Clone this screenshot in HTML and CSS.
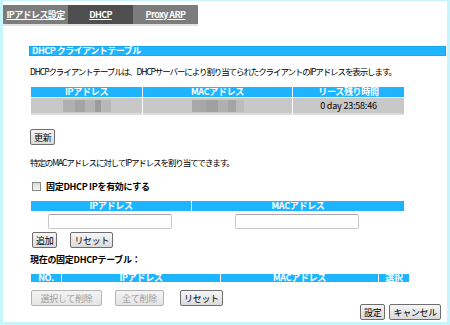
FILE: index.html
```html
<!DOCTYPE html>
<html lang="ja">
<head>
<meta charset="utf-8">
<title>DHCP</title>
<link rel="stylesheet" href="styles.css">
</head>
<body>
<div class="frame">
  <nav class="tabs">
    <a class="tab">IPアドレス設定</a>
    <a class="tab active">DHCP</a>
    <a class="tab">Proxy ARP</a>
  </nav>
  <div class="content">
    <div class="section-title">DHCP クライアントテーブル</div>
    <p class="desc">DHCPクライアントテーブルは、DHCPサーバーにより割り当てられたクライアントのIPアドレスを表示します。</p>
    <table class="grid client">
      <tr class="head">
        <th class="c-ip">IPアドレス</th>
        <th class="c-mac">MACアドレス</th>
        <th class="c-lease">リース残り時間</th>
      </tr>
      <tr class="row">
        <td><span class="blur blur-ip"></span></td>
        <td><span class="blur blur-mac"></span></td>
        <td>0 day 23:58:46</td>
      </tr>
    </table>
    <div class="btn-row refresh-row"><button class="btn">更新</button></div>
    <p class="desc desc2">特定のMACアドレスに対してIPアドレスを割り当てできます。</p>
    <label class="check-row"><span class="checkbox"></span><span class="check-label">固定DHCP IPを有効にする</span></label>
    <table class="grid static">
      <tr class="head">
        <th class="s-ip">IPアドレス</th>
        <th class="s-mac">MACアドレス</th>
      </tr>
      <tr class="input-row">
        <td><span class="input"></span></td>
        <td><span class="input"></span></td>
      </tr>
    </table>
    <div class="btn-row add-row"><button class="btn">追加</button><button class="btn">リセット</button></div>
    <div class="subhead">現在の固定DHCPテーブル：</div>
    <table class="grid current">
      <tr class="head">
        <th class="n-no">NO.</th>
        <th class="n-ip">IPアドレス</th>
        <th class="n-mac">MACアドレス</th>
        <th class="n-sel">選択</th>
      </tr>
    </table>
    <div class="btn-row del-row">
      <button class="btn btn-delsel" disabled>選択して削除</button>
      <button class="btn btn-delall" disabled>全て削除</button>
      <button class="btn">リセット</button>
    </div>
    <div class="btn-row apply-row">
      <button class="btn">設定</button>
      <button class="btn">キャンセル</button>
    </div>
  </div>
</div>
</body>
</html>
```

FILE: styles.css
```css
* { box-sizing: border-box; }
html, body { margin: 0; padding: 0; background: #fff; }
body {
  font-family: "Noto Sans CJK JP", "DejaVu Sans", sans-serif;
  font-size: 9px;
  color: #000;
}
.frame {
  width: 450px;
  height: 325px;
  border-style: solid;
  border-color: #c6f6fc;
  border-width: 1px 3px 3px 3px;
  padding-top: 4px;
  overflow: hidden;
}
.tabs {
  display: flex;
  width: 195px;
  border-bottom: 2px solid #e2e2e2;
}
.tab {
  width: 65px;
  height: 19px;
  background: #7c7c7c;
  color: #fff;
  font-weight: bold;
  text-decoration: underline;
  font-size: 9px;
  letter-spacing: -0.6px;
  line-height: 19px;
  text-align: center;
  white-space: nowrap;
}
.tab.active { background: #4e4e4e; }
.content {
  padding-left: 26px;
  padding-right: 1px;
}
.section-title {
  margin-top: 20px;
  height: 10px;
  background: #1eb4ff;
  border: 1px solid #18a6f0;
  color: #fff;
  font-weight: bold;
  font-size: 9px;
  letter-spacing: -0.5px;
  line-height: 8px;
  padding-left: 2px;
  white-space: nowrap;
}
.desc {
  margin: 9px 0 0 1px;
  line-height: 12px;
  font-size: 8.5px;
  letter-spacing: -1.1px;
  white-space: nowrap;
}
.grid {
  border-collapse: separate;
  border-spacing: 1px;
  margin-left: 1px;
  table-layout: fixed;
}
.grid th {
  background: #1eb4ff;
  color: #fff;
  font-weight: bold;
  font-size: 9px;
  letter-spacing: -0.3px;
  height: 10px;
  line-height: 10px;
  padding: 0;
  text-align: center;
  white-space: nowrap;
}
.grid td { padding: 0; text-align: center; }
.client { margin-top: 9px; width: 375px; }
.client .c-ip { width: 111px; }
.client .c-mac { width: 149px; }
.client .c-lease { width: 111px; }
.client .row td {
  background: #c8c8c8;
  height: 17px;
  border-bottom: 2px solid #dcdcdc;
  font-size: 9px;
  letter-spacing: -0.2px;
}
.blur { display: inline-block; height: 12px; vertical-align: middle; }
.blur-ip {
  width: 48px;
  background: linear-gradient(90deg, #b0b0b0 0 12px, #a4a4a4 12px 22px, #b4b4b4 22px 32px, #9c9c9c 32px 38px, #b8b8b8 38px 48px);
}
.blur-mac {
  width: 52px;
  background: linear-gradient(90deg, #a8a8a8 0 14px, #a0a0a0 14px 26px, #b0b0b0 26px 36px, #a4a4a4 36px 44px, #bcbcbc 44px 52px);
}
.btn-row { display: flex; align-items: center; }
.btn {
  font-family: inherit;
  font-size: 9px;
  letter-spacing: -0.3px;
  height: 16px;
  line-height: 13px;
  padding: 0 3px;
  margin: 0;
  color: #000;
  border: 1px solid #6e6e6e;
  border-radius: 2px;
  background: linear-gradient(#f6f6f6, #dadada);
  white-space: nowrap;
}
.btn:disabled {
  color: #9e9e9e;
  border-color: #b4b4b4;
  background: linear-gradient(#f4f4f4, #e4e4e4);
}
.refresh-row { margin-top: 13px; margin-left: 1px; }
.desc2 { margin-top: 11px; }
.check-row {
  display: flex;
  align-items: center;
  margin-top: 12px;
  margin-left: 3px;
  height: 12px;
}
.checkbox {
  width: 9px;
  height: 9px;
  border: 1px solid #8a8a8a;
  background: linear-gradient(#dcdcdc, #f4f4f4);
}
.check-label { margin-left: 5px; font-weight: bold; letter-spacing: -0.3px; }
.static { margin-top: 8px; width: 375px; }
.static .s-ip { width: 160px; }
.static .s-mac { width: 212px; }
.static .input-row td { height: 17px; padding-top: 2px; }
.input {
  display: block;
  width: 124px;
  height: 15px;
  border: 1px solid #c8c8cc;
  border-top-color: #a8a8a8;
  border-radius: 2px;
  background: #fff;
  margin: 0 auto 0 17px;
}
.static .input-row td:last-child .input { margin-left: 43px; }
.add-row { margin-top: 2px; margin-left: 3px; gap: 13px; }
.subhead { margin-top: 6px; margin-left: 1px; font-weight: bold; line-height: 12px; letter-spacing: -0.3px; }
.current { margin-top: 7px; width: 380px; }
.current th { height: 8px; line-height: 8px; }
.current .n-no { width: 30px; }
.current .n-ip { width: 158px; }
.current .n-mac { width: 157px; }
.current .n-sel { width: 30px; }
.del-row { margin-top: 7px; margin-left: 2px; }
.btn-delsel { width: 71px; }
.btn-delall { width: 49px; margin-left: 13px; }
.del-row .btn:nth-child(3) { margin-left: 16px; }
.apply-row {
  justify-content: flex-end;
  gap: 4px;
  margin-top: -2px;
  margin-right: 5px;
}
```
